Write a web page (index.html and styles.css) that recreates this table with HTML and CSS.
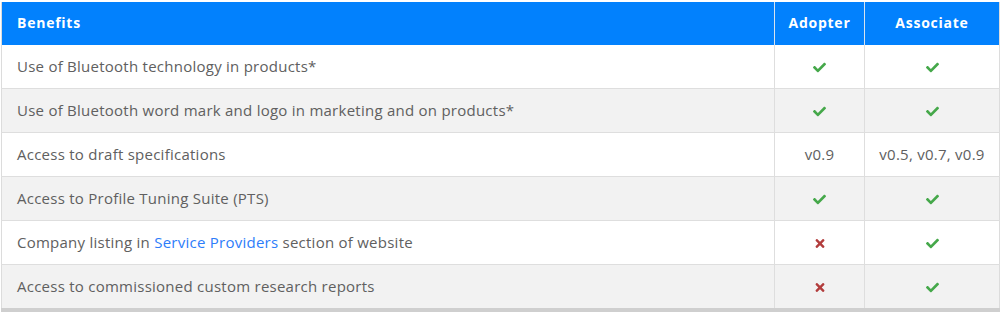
FILE: index.html
```html
<!DOCTYPE html>
<html>
<head>
<meta charset="utf-8">
<link rel="stylesheet" href="styles.css">
</head>
<body>
<div class="wrap">
<table class="benefits">
  <colgroup>
    <col class="c-benefit">
    <col class="c-adopter">
    <col class="c-associate">
  </colgroup>
  <thead>
    <tr>
      <th class="left">Benefits</th>
      <th>Adopter</th>
      <th>Associate</th>
    </tr>
  </thead>
  <tbody>
    <tr>
      <td class="left">Use of Bluetooth technology in products*</td>
      <td><svg class="ok" viewBox="0 0 512 512"><path d="M173.9 439.4l-166.4-166.4c-10-10-10-26.2 0-36.2l36.2-36.2c10-10 26.2-10 36.2 0L192 312.7 432.1 72.6c10-10 26.2-10 36.2 0l36.2 36.2c10 10 10 26.2 0 36.2l-294.4 294.4c-10 10-26.2 10-36.2 0z"/></svg></td>
      <td><svg class="ok" viewBox="0 0 512 512"><path d="M173.9 439.4l-166.4-166.4c-10-10-10-26.2 0-36.2l36.2-36.2c10-10 26.2-10 36.2 0L192 312.7 432.1 72.6c10-10 26.2-10 36.2 0l36.2 36.2c10 10 10 26.2 0 36.2l-294.4 294.4c-10 10-26.2 10-36.2 0z"/></svg></td>
    </tr>
    <tr>
      <td class="left">Use of Bluetooth word mark and logo in marketing and on products*</td>
      <td><svg class="ok" viewBox="0 0 512 512"><path d="M173.9 439.4l-166.4-166.4c-10-10-10-26.2 0-36.2l36.2-36.2c10-10 26.2-10 36.2 0L192 312.7 432.1 72.6c10-10 26.2-10 36.2 0l36.2 36.2c10 10 10 26.2 0 36.2l-294.4 294.4c-10 10-26.2 10-36.2 0z"/></svg></td>
      <td><svg class="ok" viewBox="0 0 512 512"><path d="M173.9 439.4l-166.4-166.4c-10-10-10-26.2 0-36.2l36.2-36.2c10-10 26.2-10 36.2 0L192 312.7 432.1 72.6c10-10 26.2-10 36.2 0l36.2 36.2c10 10 10 26.2 0 36.2l-294.4 294.4c-10 10-26.2 10-36.2 0z"/></svg></td>
    </tr>
    <tr>
      <td class="left">Access to draft specifications</td>
      <td>v0.9</td>
      <td>v0.5, v0.7, v0.9</td>
    </tr>
    <tr>
      <td class="left">Access to Profile Tuning Suite (PTS)</td>
      <td><svg class="ok" viewBox="0 0 512 512"><path d="M173.9 439.4l-166.4-166.4c-10-10-10-26.2 0-36.2l36.2-36.2c10-10 26.2-10 36.2 0L192 312.7 432.1 72.6c10-10 26.2-10 36.2 0l36.2 36.2c10 10 10 26.2 0 36.2l-294.4 294.4c-10 10-26.2 10-36.2 0z"/></svg></td>
      <td><svg class="ok" viewBox="0 0 512 512"><path d="M173.9 439.4l-166.4-166.4c-10-10-10-26.2 0-36.2l36.2-36.2c10-10 26.2-10 36.2 0L192 312.7 432.1 72.6c10-10 26.2-10 36.2 0l36.2 36.2c10 10 10 26.2 0 36.2l-294.4 294.4c-10 10-26.2 10-36.2 0z"/></svg></td>
    </tr>
    <tr>
      <td class="left">Company listing in <a href="#">Service Providers</a> section of website</td>
      <td><svg class="no" viewBox="0 0 352 512"><path d="M242.7 256l100.1-100.1c12.3-12.3 12.3-32.2 0-44.5l-22.2-22.2c-12.3-12.3-32.2-12.3-44.5 0L176 189.3 75.9 89.2c-12.3-12.3-32.2-12.3-44.5 0L9.2 111.4c-12.3 12.3-12.3 32.2 0 44.5L109.3 256 9.2 356.1c-12.3 12.3-12.3 32.2 0 44.5l22.2 22.2c12.3 12.3 32.2 12.3 44.5 0L176 322.7l100.1 100.1c12.3 12.3 32.2 12.3 44.5 0l22.2-22.2c12.3-12.3 12.3-32.2 0-44.5L242.7 256z"/></svg></td>
      <td><svg class="ok" viewBox="0 0 512 512"><path d="M173.9 439.4l-166.4-166.4c-10-10-10-26.2 0-36.2l36.2-36.2c10-10 26.2-10 36.2 0L192 312.7 432.1 72.6c10-10 26.2-10 36.2 0l36.2 36.2c10 10 10 26.2 0 36.2l-294.4 294.4c-10 10-26.2 10-36.2 0z"/></svg></td>
    </tr>
    <tr>
      <td class="left">Access to commissioned custom research reports</td>
      <td><svg class="no" viewBox="0 0 352 512"><path d="M242.7 256l100.1-100.1c12.3-12.3 12.3-32.2 0-44.5l-22.2-22.2c-12.3-12.3-32.2-12.3-44.5 0L176 189.3 75.9 89.2c-12.3-12.3-32.2-12.3-44.5 0L9.2 111.4c-12.3 12.3-12.3 32.2 0 44.5L109.3 256 9.2 356.1c-12.3 12.3-12.3 32.2 0 44.5l22.2 22.2c12.3 12.3 32.2 12.3 44.5 0L176 322.7l100.1 100.1c12.3 12.3 32.2 12.3 44.5 0l22.2-22.2c12.3-12.3 12.3-32.2 0-44.5L242.7 256z"/></svg></td>
      <td><svg class="ok" viewBox="0 0 512 512"><path d="M173.9 439.4l-166.4-166.4c-10-10-10-26.2 0-36.2l36.2-36.2c10-10 26.2-10 36.2 0L192 312.7 432.1 72.6c10-10 26.2-10 36.2 0l36.2 36.2c10 10 10 26.2 0 36.2l-294.4 294.4c-10 10-26.2 10-36.2 0z"/></svg></td>
    </tr>
  </tbody>
</table>
</div>
</body>
</html>
```

FILE: styles.css
```css
html, body {
  margin: 0;
  padding: 0;
  background: #fff;
}
.wrap {
  padding: 2px 1px 0 1px;
}
.benefits {
  width: 999px;
  border-collapse: collapse;
  table-layout: fixed;
  font-family: "Open Sans", "Noto Sans", sans-serif;
  font-size: 15px;
  letter-spacing: 0.25px;
  color: #606060;
  border-left: 1px solid #dcdcdc;
  border-right: 1px solid #dcdcdc;
  border-bottom: 4px solid #cfcfcf;
}
.c-benefit { width: 773px; }
.c-adopter { width: 90px; }
.c-associate { width: auto; }
.benefits th {
  background: #0281fd;
  color: #fff;
  font-weight: 700;
  font-size: 14px;
  letter-spacing: 0.75px;
  height: 41px;
  padding: 0 0 2px 0;
  text-align: center;
  border-left: 1px solid #d8e3ee;
}
.benefits th:first-child { border-left: 0; }
.benefits td {
  height: 41px;
  padding: 0 0 2px 0;
  text-align: center;
  border-bottom: 1px solid #dedede;
  border-left: 1px solid #dedede;
}
.benefits td:first-child { border-left: 0; }
.benefits tbody tr:last-child td { border-bottom: 0; }
.benefits .left {
  text-align: left;
  padding-left: 15px;
}
.benefits tbody tr:nth-child(even) td { background: #f2f2f2; }
.benefits a {
  color: #2d7dfa;
  text-decoration: none;
}
.ok {
  width: 13px;
  height: 13px;
  fill: #45a84a;
  vertical-align: middle;
}
.no {
  width: 10px;
  height: 13px;
  fill: #b23c3c;
  vertical-align: middle;
}
```
